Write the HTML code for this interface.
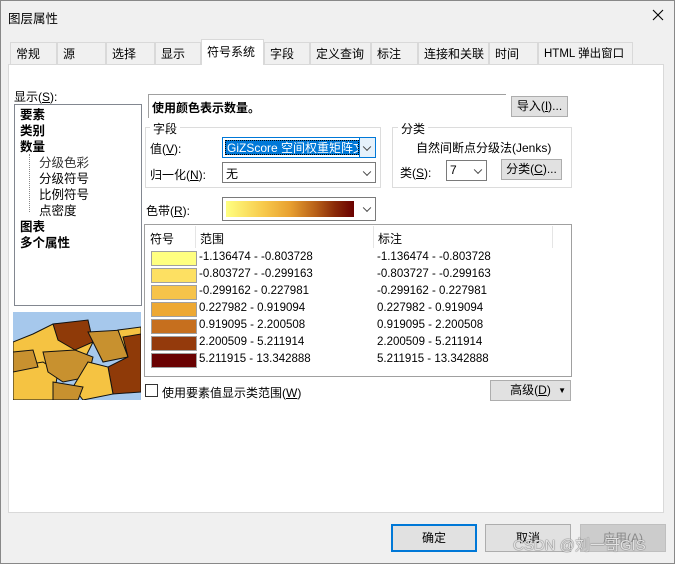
<!DOCTYPE html>
<html><head><meta charset="utf-8"><style>
*{box-sizing:border-box;margin:0;padding:0}
body{width:675px;height:564px;background:#f0f0f0;font-family:"Liberation Sans","Noto Sans CJK SC",sans-serif;font-size:12px;color:#000;position:relative;overflow:hidden}
.a{position:absolute}
.win{left:0;top:0;width:675px;height:564px;border:1px solid #888}
.tab{position:absolute;top:42px;height:22px;border:1px solid #d9d9d9;border-bottom:none;background:#f0f0f0;padding:2px 0 0 5px;font-size:12px;white-space:nowrap;overflow:hidden}
.btn{position:absolute;background:#e1e1e1;border:1px solid #adadad;text-align:center;font-size:12px}
.combo{position:absolute;background:#fff;border:1px solid #7a7a7a}
.chev{position:absolute;right:5px;top:50%;width:6px;height:6px;border-right:1px solid #444;border-bottom:1px solid #444;transform:translateY(-70%) rotate(45deg)}
.grp{position:absolute;border:1px solid #dcdcdc}
.sw{position:absolute;left:7px;width:46px;height:15px;border:1px solid #a0a0a0}
.rt{position:absolute;font-size:11.5px}
</style></head><body>
<div class="a win"></div>
<div class="a" style="left:8px;top:8px;font-size:12.5px">图层属性</div>
<svg class="a" style="left:652px;top:9px" width="12" height="12"><path d="M1 1L11 11M11 1L1 11" stroke="#000" stroke-width="1.1"/></svg>
<div class="a" style="left:8px;top:64px;width:656px;height:449px;background:#fff;border:1px solid #d9d9d9"></div>
<div class="tab" style="left:10px;width:47px">常规</div>
<div class="tab" style="left:57px;width:49px">源</div>
<div class="tab" style="left:106px;width:49px">选择</div>
<div class="tab" style="left:155px;width:46px">显示</div>
<div class="tab" style="left:201px;width:63px;top:39px;height:26px;background:#fff;padding-top:3px">符号系统</div>
<div class="tab" style="left:264px;width:46px">字段</div>
<div class="tab" style="left:310px;width:61px">定义查询</div>
<div class="tab" style="left:371px;width:47px">标注</div>
<div class="tab" style="left:418px;width:71px">连接和关联</div>
<div class="tab" style="left:489px;width:49px">时间</div>
<div class="tab" style="left:538px;width:95px;font-size:11.5px">HTML 弹出窗口</div>

<div class="a" style="left:14px;top:88px">显示(<u>S</u>):</div>
<div class="a" style="left:14px;top:104px;width:128px;height:202px;border:1px solid #828790;background:#fff;line-height:16px;padding:2px 0 0 5px;font-weight:bold;font-size:12.5px">
要素<br>类别<br>数量<br>
<span style="font-weight:normal;padding-left:19px;color:#333">分级色彩</span><br>
<span style="font-weight:normal;padding-left:19px">分级符号</span><br>
<span style="font-weight:normal;padding-left:19px">比例符号</span><br>
<span style="font-weight:normal;padding-left:19px">点密度</span><br>
图表<br>多个属性</div>
<div class="a" style="left:29px;top:154px;width:1px;height:58px;border-left:1px dotted #888"></div>

<svg class="a" style="left:13px;top:312px" width="128" height="88" viewBox="0 0 128 88">
<rect width="128" height="88" fill="#a6c8ec"/>
<g stroke="#111" stroke-width="1">
<polygon points="0,30 20,22 40,12 70,10 80,30 70,50 40,55 20,50 0,55" fill="#f5c342"/>
<polygon points="40,12 75,8 80,30 62,38 45,28" fill="#8f3a08"/>
<polygon points="75,20 110,18 115,45 90,50 80,30" fill="#c8912f"/>
<polygon points="105,18 128,15 128,45 115,45" fill="#f5c342"/>
<polygon points="110,25 128,22 128,80 100,82 95,55 115,45" fill="#8f3a08"/>
<polygon points="0,55 30,50 45,60 40,88 0,88" fill="#f5c342"/>
<polygon points="30,40 62,38 80,45 75,65 50,70 35,60" fill="#c8912f"/>
<polygon points="75,50 95,55 100,82 70,88 60,75" fill="#f5c342"/>
<polygon points="40,70 70,75 65,88 40,88" fill="#c8912f"/>
<polygon points="0,40 20,38 25,55 0,60" fill="#c8912f"/>
</g></svg>

<div class="a" style="left:148px;top:94px;width:358px;height:24px;border-top:1px solid #a0a0a0;border-left:1px solid #a0a0a0;padding:4px 0 0 3px;font-weight:bold">使用颜色表示数量。</div>
<div class="btn" style="left:511px;top:96px;width:57px;height:21px;line-height:19px">导入(<u>I</u>)...</div>

<div class="grp" style="left:145px;top:127px;width:236px;height:61px"></div>
<div class="a" style="left:150px;top:120px;background:#fff;padding:0 3px">字段</div>
<div class="a" style="left:150px;top:140px">值(<u>V</u>):</div>
<div class="combo" style="left:222px;top:137px;width:154px;height:21px;border:1px solid #0078d7"><div class="a" style="left:2px;top:2px;width:134px;height:15px;background:#0078d7;color:#fff;border:1px dotted #000;padding-left:1px;font-size:12px;line-height:14px;white-space:nowrap;overflow:hidden">GiZScore 空间权重矩阵文</div><div class="a" style="right:0;top:0;width:16px;height:19px;background:#e5f1fb;border-left:1px solid #0078d7"><div class="chev"></div></div></div>
<div class="a" style="left:150px;top:166px">归一化(<u>N</u>):</div>
<div class="combo" style="left:222px;top:162px;width:154px;height:21px"><span class="a" style="left:3px;top:2px">无</span><div class="chev"></div></div>

<div class="grp" style="left:392px;top:127px;width:180px;height:61px"></div>
<div class="a" style="left:398px;top:120px;background:#fff;padding:0 3px">分类</div>
<div class="a" style="left:416px;top:139px">自然间断点分级法(Jenks)</div>
<div class="a" style="left:400px;top:164px">类(<u>S</u>):</div>
<div class="combo" style="left:446px;top:160px;width:41px;height:21px"><span class="a" style="left:3px;top:2px">7</span><div class="chev"></div></div>
<div class="btn" style="left:501px;top:159px;width:61px;height:21px;line-height:19px">分类(<u>C</u>)...</div>

<div class="a" style="left:146px;top:202px">色带(<u>R</u>):</div>
<div class="combo" style="left:222px;top:197px;width:154px;height:24px"><div class="a" style="left:3px;top:3px;width:128px;height:16px;background:linear-gradient(90deg,#ffff80,#f7c84a 30%,#e8a030 50%,#b86018 70%,#8a2a08 85%,#6a0000)"></div><div class="chev"></div></div>

<div class="a" style="left:144px;top:224px;width:428px;height:153px;border:1px solid #a0a0a0;background:#fff"></div>
<div class="a" style="left:150px;top:230px">符号</div>
<div class="a" style="left:195px;top:226px;height:22px;border-left:1px solid #e5e5e5"></div>
<div class="a" style="left:200px;top:230px">范围</div>
<div class="a" style="left:373px;top:226px;height:22px;border-left:1px solid #e5e5e5"></div>
<div class="a" style="left:378px;top:230px">标注</div>
<div class="a" style="left:552px;top:226px;height:22px;border-left:1px solid #e5e5e5"></div>
<div class="a" style="left:144px;top:250px;width:428px;height:120px">
<div class="sw" style="top:1px;background:#ffff80"></div><div class="rt" style="left:55px;top:1px">-1.136474 - -0.803728</div><div class="rt" style="left:233px;top:1px">-1.136474 - -0.803728</div>
<div class="sw" style="top:18px;background:#fde062"></div><div class="rt" style="left:55px;top:18px">-0.803727 - -0.299163</div><div class="rt" style="left:233px;top:18px">-0.803727 - -0.299163</div>
<div class="sw" style="top:35px;background:#f6c34a"></div><div class="rt" style="left:55px;top:35px">-0.299162 - 0.227981</div><div class="rt" style="left:233px;top:35px">-0.299162 - 0.227981</div>
<div class="sw" style="top:52px;background:#eda833"></div><div class="rt" style="left:55px;top:52px">0.227982 - 0.919094</div><div class="rt" style="left:233px;top:52px">0.227982 - 0.919094</div>
<div class="sw" style="top:69px;background:#c66f1e"></div><div class="rt" style="left:55px;top:69px">0.919095 - 2.200508</div><div class="rt" style="left:233px;top:69px">0.919095 - 2.200508</div>
<div class="sw" style="top:86px;background:#943a0c"></div><div class="rt" style="left:55px;top:86px">2.200509 - 5.211914</div><div class="rt" style="left:233px;top:86px">2.200509 - 5.211914</div>
<div class="sw" style="top:103px;background:#6a0202"></div><div class="rt" style="left:55px;top:103px">5.211915 - 13.342888</div><div class="rt" style="left:233px;top:103px">5.211915 - 13.342888</div>
</div>

<div class="a" style="left:145px;top:384px;width:13px;height:13px;border:1px solid #333;background:#fff"></div>
<div class="a" style="left:162px;top:384px">使用要素值显示类范围(<u>W</u>)</div>
<div class="btn" style="left:490px;top:380px;width:81px;height:21px;line-height:19px">高级(<u>D</u>) <span style="position:absolute;right:4px;top:0;font-size:8px">▼</span></div>

<div class="btn" style="left:391px;top:524px;width:86px;height:28px;line-height:25px;border:2px solid #0078d7">确定</div>
<div class="btn" style="left:485px;top:524px;width:86px;height:28px;line-height:26px">取消</div>
<div class="btn" style="left:580px;top:524px;width:86px;height:28px;line-height:26px;background:#cccccc;border-color:#bfbfbf;color:#8a8a8a">应用(A)</div>
<div class="a" style="left:513px;top:534px;font-size:15px;color:rgba(240,240,240,0.9);text-shadow:0 0 1px #666,0 0 1px #666">CSDN @刘一哥GIS</div>
</body></html>
